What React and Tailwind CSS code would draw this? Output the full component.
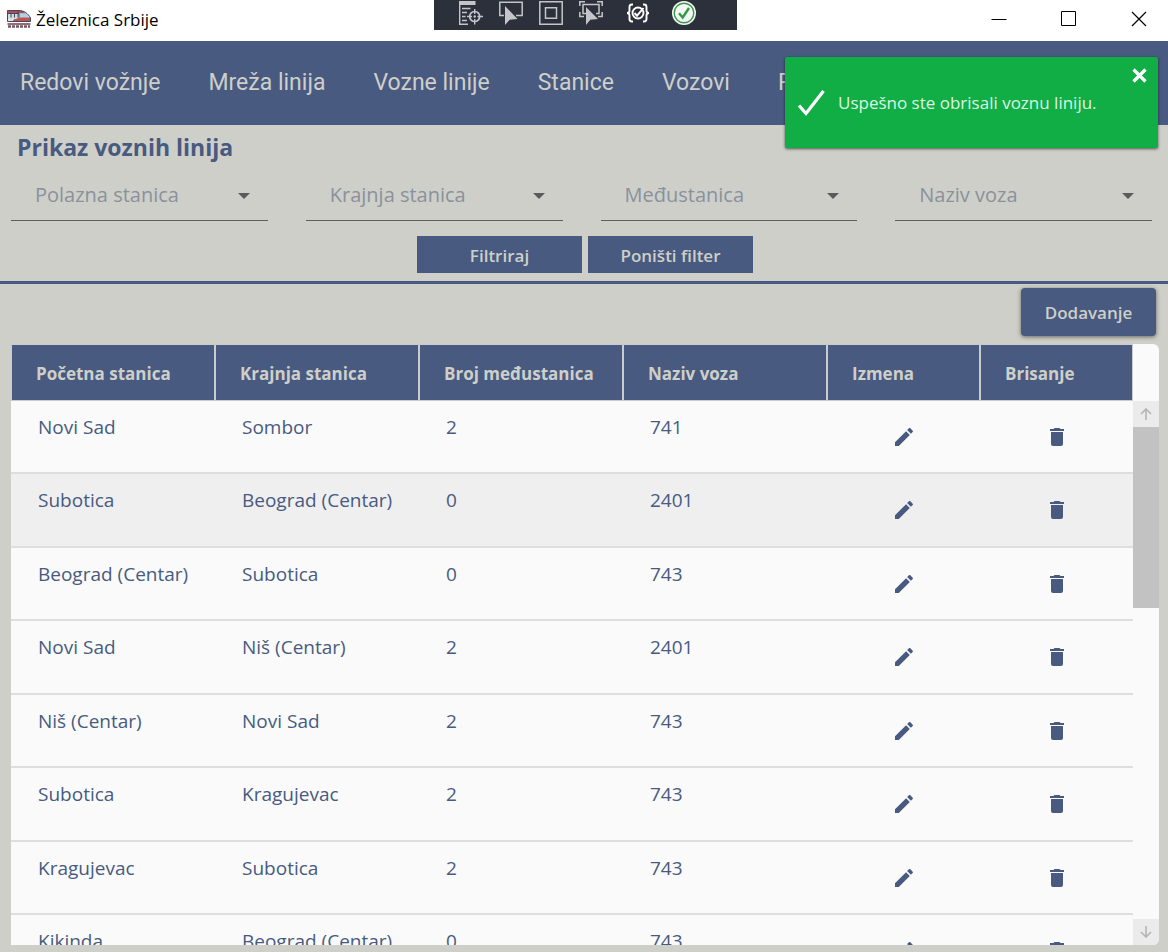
import React from 'react';

const navItems = ['Redovi vožnje', 'Mreža linija', 'Vozne linije', 'Stanice', 'Vozovi', 'P'];
const filters = ['Polazna stanica', 'Krajnja stanica', 'Međustanica', 'Naziv voza'];
const columns = ['Početna stanica', 'Krajnja stanica', 'Broj međustanica', 'Naziv voza', 'Izmena', 'Brisanje'];
const rows = [
  ['Novi Sad', 'Sombor', '2', '741'],
  ['Subotica', 'Beograd (Centar)', '0', '2401'],
  ['Beograd (Centar)', 'Subotica', '0', '743'],
  ['Novi Sad', 'Niš (Centar)', '2', '2401'],
  ['Niš (Centar)', 'Novi Sad', '2', '743'],
  ['Subotica', 'Kragujevac', '2', '743'],
  ['Kragujevac', 'Subotica', '2', '743'],
  ['Kikinda', 'Beograd (Centar)', '0', '743'],
];

function TrainIcon() {
  return (
    <svg className="h-5 w-6" viewBox="0 0 24 20" aria-hidden="true">
      <path d="M.5 1.500H12c5 0 9 3 11.500 7.500v3.500H.5z" fill="#c9dbe6" />
      <path d="M.5 1.500H12c3 0 5 1 7 3H.5z" fill="#b9494f" />
      <path d="M12 4.500h7l3 4h-8z" fill="#a9d3e8" />
      <path d="M1 10h8l3-1.500h11.500l.3 3.500H1z" fill="#c5504f" />
      <path d="M1 9.500h7l-3 3H1z" fill="#e8e5df" />
      <path d="M.5 1.500H12c5 0 9 3 11.500 7.500v3.500H.5zM.5 4.500H12v4M4 4.500v4M7.500 4.500v4M11 2v6.500" fill="none" stroke="#3f4a5c" />
      <path d="M.5 15h23" stroke="#5c4450" strokeWidth="1.500" />
      <path d="M1 17.500h22" stroke="#7d5660" strokeWidth="2.500" strokeDasharray="3 1" />
    </svg>
  );
}

const toolIcon = 'h-6 w-6 text-[#c4c5c8]';

function TreeTargetIcon() {
  return (
    <svg className={toolIcon} viewBox="0 0 24 24" fill="none" stroke="currentColor" strokeWidth="1.400" aria-hidden="true">
      <path d="M0 0h16.500v4H0z" fill="currentColor" stroke="none" />
      <path d="M.7 4v19.300H9M3 7.500h8.500M3 11.500h5M3 15.500h3.500M3 19.500h5" />
      <circle cx="15.700" cy="15.500" r="5" strokeWidth="1.700" />
      <path d="M15.700 8v5M15.700 18v5.500M8 15.500h5M18.500 15.500H24" />
      <circle cx="15.700" cy="15.500" r="1.200" fill="currentColor" stroke="none" />
    </svg>
  );
}

function SelectElementIcon() {
  return (
    <svg className={toolIcon} viewBox="0 0 24 24" fill="none" aria-hidden="true">
      <path d="M5 14.500H.8V1.200h22.400v13.300H17" stroke="currentColor" strokeWidth="1.500" />
      <path d="M6 5v19l4.700-5.200L18.500 18z" fill="currentColor" />
    </svg>
  );
}

function LayoutIcon() {
  return (
    <svg className={toolIcon} viewBox="0 0 24 24" fill="none" stroke="currentColor" strokeWidth="1.500" aria-hidden="true">
      <path d="M.8.8h22.400v22.400H.8zM6.500 6.800h11v10.500h-11z" />
    </svg>
  );
}

function TrackFocusIcon() {
  return (
    <svg className={toolIcon} viewBox="0 0 24 24" fill="none" stroke="currentColor" strokeWidth="1.500" aria-hidden="true">
      <path d="M.8 5V.8H6M18 .8h5.200V5M.8 11v4.500H5M23.200 11v4.500H19" />
      <path d="M7 12.500H4V3.500h16v9h-3" />
      <path d="M7 6v18l4.300-5.200L19 18z" fill="currentColor" stroke="none" />
    </svg>
  );
}

function HotReloadIcon() {
  return (
    <svg className="h-6 w-6 text-white" viewBox="0 0 24 24" fill="none" stroke="currentColor" strokeWidth="1.900" aria-hidden="true">
      <path d="M7 3.500H6Q3.500 3.500 3.500 6v3.500Q3.500 12 1 12q2.500 0 2.500 2.500V18Q3.500 20.500 6 20.500h1M17 3.500h1q2.500 0 2.500 2.500v3.500Q20.500 12 23 12q-2.500 0-2.500 2.500V18q0 2.500-2.500 2.500h-1" />
      <circle cx="12" cy="12" r="5.500" />
      <path d="M8.500 12l2.500 2.700L17.500 7" />
    </svg>
  );
}

function StatusIcon() {
  return (
    <svg className="h-6 w-6" viewBox="0 0 24 24" fill="none" aria-hidden="true">
      <circle cx="12" cy="12" r="12" fill="#f4f8f4" />
      <circle cx="12" cy="12" r="9.800" stroke="#3d9a4c" strokeWidth="1.400" />
      <path d="M7 12.200l3.700 4.300L17 7" stroke="#2f9a43" strokeWidth="2.400" />
    </svg>
  );
}

function DebugToolbar() {
  return (
    <div className="absolute top-0 left-[434px] flex h-[30px] w-[303px] items-start gap-4 bg-[#2c303b] pt-px pl-[25px]">
      <button type="button" aria-label="Live Visual Tree"><TreeTargetIcon /></button>
      <button type="button" aria-label="Select Element"><SelectElementIcon /></button>
      <button type="button" aria-label="Layout"><LayoutIcon /></button>
      <button type="button" aria-label="Track Focus"><TrackFocusIcon /></button>
      <div className="flex gap-[22px] pl-[7px]">
        <button type="button" aria-label="Hot Reload"><HotReloadIcon /></button>
        <button type="button" aria-label="Status"><StatusIcon /></button>
      </div>
    </div>
  );
}

function TitleBar() {
  return (
    <header className="relative flex h-[41px] shrink-0 items-start justify-between bg-white text-black">
      <div className="flex h-[38px] items-center gap-[5px] pl-[7px]">
        <TrainIcon />
        <span className="pt-px text-[17px]">Železnica Srbije</span>
      </div>
      <DebugToolbar />
      <div className="flex h-[37px] items-center gap-[54px] pr-[21px]">
        <button type="button" aria-label="Minimize">
          <svg className="size-4" viewBox="0 0 16 16"><path d="M.5 8.500h15" stroke="#000" /></svg>
        </button>
        <button type="button" aria-label="Maximize">
          <svg className="size-4" viewBox="0 0 16 16"><path d="M.5.5h14v14H.5z" fill="none" stroke="#000" /></svg>
        </button>
        <button type="button" aria-label="Close">
          <svg className="size-4" viewBox="0 0 16 16"><path d="M1 1l14 14M15 1L1 15" stroke="#000" strokeWidth="1.200" /></svg>
        </button>
      </div>
    </header>
  );
}

function Toast() {
  return (
    <div role="status" className="absolute top-[57px] right-[10px] flex h-[91px] w-[373px] items-center gap-[13px] rounded-xs bg-[#11ad45] pl-3 text-[#dcf5e4] shadow-[0_1px_3px_rgba(0,0,0,0.6)]">
      <svg className="h-7 w-7" viewBox="0 0 28 28" fill="none" aria-hidden="true">
        <path d="M2 16.500l7 8L26.500 2" stroke="#fff" strokeWidth="3.200" />
      </svg>
      <p className="text-[17px] font-medium">Uspešno ste obrisali voznu liniju.</p>
      <button type="button" aria-label="Zatvori" className="absolute top-[11px] right-[11px]">
        <svg className="size-[15px]" viewBox="0 0 15 15"><path d="M1.500 1.500l12 12M13.500 1.500l-12 12" stroke="#fff" strokeWidth="3.200" /></svg>
      </button>
    </div>
  );
}

function Filter({ label }) {
  return (
    <div className="relative flex items-center">
      <select aria-label={label} defaultValue="" className="h-[51px] w-full appearance-none border-b border-[#5f605c] bg-transparent pl-6 text-[20px] text-[#8a919d]">
        <option value="">{label}</option>
      </select>
      <svg className="pointer-events-none absolute right-[18px] h-[6px] w-3" viewBox="0 0 12 6" aria-hidden="true">
        <path d="M0 0h12L6 6z" fill="#5b5c59" />
      </svg>
    </div>
  );
}

function LinesTable() {
  return (
    <div className="min-w-0 flex-1 overflow-y-auto [scrollbar-width:none]">
      <table className="w-full table-fixed border-separate border-spacing-0 text-left">
        <colgroup>
          {columns.map((c, i) => (
            <col key={c} className={i < 4 ? 'w-[204px]' : 'w-[153px]'} />
          ))}
        </colgroup>
        <thead className="sticky top-0">
          <tr>
            {columns.map((c) => (
              <th key={c} scope="col" className="h-[57px] border border-[#c9ccce] bg-[#485a80] px-6 pt-[3px] text-[17px] font-bold whitespace-nowrap text-[#cecfc9]">
                {c}
              </th>
            ))}
          </tr>
        </thead>
        <tbody>
          {rows.map((row, i) => (
            <tr key={i} className={i === 1 ? 'h-[74px] bg-[#efefef]' : 'odd:h-[73px] even:h-[74px]'}>
              {row.map((cell, j) => (
                <td key={j} className="border-b-2 border-[#dedede] pt-3 pl-[27px] align-top text-[19px] leading-7 whitespace-nowrap">
                  {cell}
                </td>
              ))}
              <td className="border-b-2 border-[#dedede] pt-6 align-top">
                <button type="button" aria-label="Izmena" className="mx-auto block">
                  <svg className="size-6" viewBox="0 0 24 24" fill="currentColor" aria-hidden="true">
                    <path d="M20.710 7.040c.39-.39.39-1.040 0-1.410l-2.340-2.340c-.37-.39-1.020-.39-1.410 0l-1.840 1.830 3.750 3.750M3 17.250V21h3.750L17.810 9.930l-3.750-3.750L3 17.250z" />
                  </svg>
                </button>
              </td>
              <td className="border-b-2 border-[#dedede] pt-6 align-top">
                <button type="button" aria-label="Brisanje" className="mx-auto block">
                  <svg className="size-6" viewBox="0 0 24 24" fill="currentColor" aria-hidden="true">
                    <path d="M19 4h-3.500l-1-1h-5l-1 1H5v2h14M6 19a2 2 0 0 0 2 2h8a2 2 0 0 0 2-2V7H6v12z" />
                  </svg>
                </button>
              </td>
            </tr>
          ))}
        </tbody>
      </table>
    </div>
  );
}

function ScrollBar() {
  return (
    <div className="flex w-[26px] shrink-0 flex-col pt-[57px] text-[#b5b5b5]">
      <button type="button" aria-label="Gore" className="flex h-[26px] shrink-0 items-center justify-center bg-[#ebebeb]">
        <svg className="h-3 w-3" viewBox="0 0 12 12" fill="none" stroke="currentColor" strokeWidth="1.600"><path d="M6 12V1M1 6l5-5 5 5" /></svg>
      </button>
      <div className="flex-1">
        <div className="h-[181px] bg-[#c2c2c2]" />
      </div>
      <button type="button" aria-label="Dole" className="flex h-[26px] shrink-0 items-center justify-center bg-[#ebebeb]">
        <svg className="h-3 w-3" viewBox="0 0 12 12" fill="none" stroke="currentColor" strokeWidth="1.600"><path d="M6 0v11M1 6l5 5 5-5" /></svg>
      </button>
    </div>
  );
}

export default function App() {
  return (
    <div className="relative flex h-screen flex-col overflow-hidden bg-[#cecfc9] font-['Open_Sans','Noto_Sans',sans-serif] text-[#485a80]">
      <TitleBar />
      <nav className="flex h-[84px] shrink-0 items-center gap-12 bg-[#485a80] px-5 font-['Roboto',sans-serif] text-[23px] whitespace-nowrap text-[#cecfc9]">
        {navItems.map((n) => (
          <a key={n} href="#">{n}</a>
        ))}
      </nav>
      <section className="border-b-3 border-[#485a80] pr-[9px] pb-2 pl-[11px]">
        <h1 className="pt-[6px] pl-[6px] text-[23px] leading-8 font-bold">Prikaz voznih linija</h1>
        <div className="grid grid-cols-4 gap-[38px] pt-[7px] pr-[7px]">
          {filters.map((f) => (
            <Filter key={f} label={f} />
          ))}
        </div>
        <div className="flex justify-center gap-[6px] pt-[15px] text-[17px] font-semibold text-[#cecfc9]">
          <button type="button" className="h-[37px] w-[165px] bg-[#485a80] pt-[2px]">Filtriraj</button>
          <button type="button" className="h-[37px] w-[165px] bg-[#485a80] pt-[2px]">Poništi filter</button>
        </div>
      </section>
      <main className="flex min-h-0 flex-1 flex-col items-end gap-2 pt-1 pr-[9px] pb-[7px] pl-[11px]">
        <button type="button" className="mr-[3px] h-12 w-[135px] shrink-0 rounded-sm bg-[#485a80] pt-[2px] text-[17px] font-semibold text-[#cecfc9] shadow-[0_1px_4px_rgba(0,0,0,0.5)]">
          Dodavanje
        </button>
        <div className="flex min-h-0 w-full flex-1 overflow-hidden rounded-r-md bg-[#fafafa]">
          <LinesTable />
          <ScrollBar />
        </div>
      </main>
      <Toast />
    </div>
  );
}
